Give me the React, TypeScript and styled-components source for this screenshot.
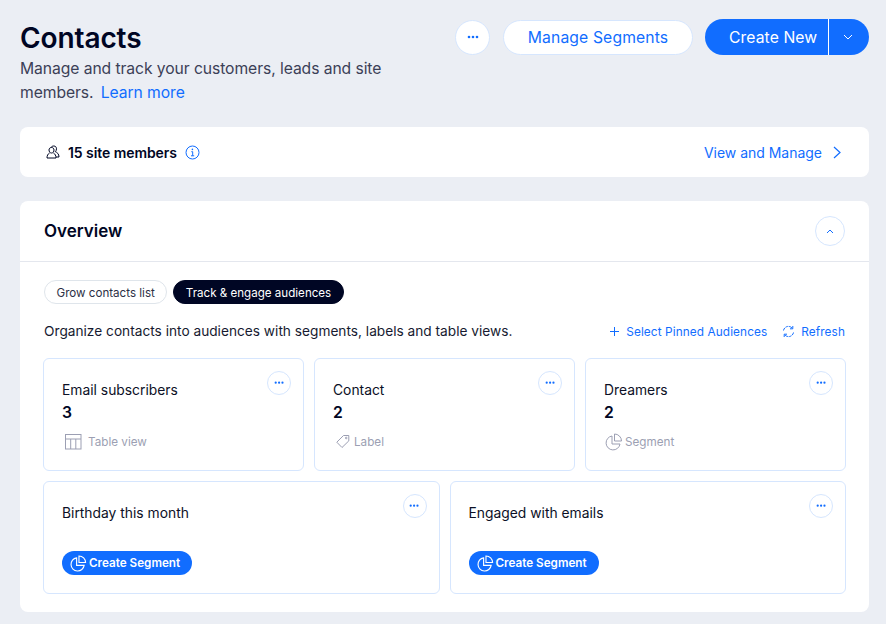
import React from "react";
import styled, { createGlobalStyle } from "styled-components";

const Global = createGlobalStyle`
  html, body { margin: 0; padding: 0; background: #ebeef4; }
  body { font-family: Inter, "Noto Sans", "Liberation Sans", sans-serif; color: #000624; -webkit-font-smoothing: antialiased; }
  * { box-sizing: border-box; }
`;

const BLUE = "#116dff";

const Page = styled.div`
  width: 886px;
  height: 624px;
  overflow: hidden;
  padding: 0 17px 0 20px;
`;
const Header = styled.header`
  display: flex;
  justify-content: space-between;
  align-items: flex-start;
  height: 127px;
  padding-top: 19px;
`;
const TitleBlock = styled.div`
  width: 390px;
`;
const Title = styled.h1`
  margin: 0 0 1px;
  padding-top: 1px;
  font-size: 28px;
  line-height: 36px;
  font-weight: 600;
  letter-spacing: -0.1px;
`;
const Subtitle = styled.p`
  margin: 0;
  font-size: 15.7px;
  line-height: 24px;
  color: #3b4057;
  letter-spacing: -0.08px;
`;
const TextLink = styled.a`
  color: ${BLUE};
  margin-left: 3px;
`;
const Actions = styled.div`
  display: flex;
  align-items: center;
  height: 36px;
`;
const CircleButton = styled.button<{ $size: number }>`
  width: ${(p) => p.$size}px;
  height: ${(p) => p.$size}px;
  padding: 0;
  flex: none;
  border-radius: 50%;
  border: 1px solid #d6e6fe;
  background: #fff;
  color: ${BLUE};
  display: flex;
  align-items: center;
  justify-content: center;
`;
const OutlineButton = styled.button`
  width: 190px;
  height: 35px;
  margin: 0 12px 0 13px;
  border-radius: 18px;
  border: 1px solid #d6e6fe;
  background: #fff;
  color: ${BLUE};
  font: 400 15.7px Inter, sans-serif;
  letter-spacing: 0.13px;
  padding: 0;
`;
const SplitButton = styled.div`
  display: flex;
  width: 164px;
  height: 36px;
  border-radius: 18px;
  overflow: hidden;
  background: ${BLUE};
  color: #fff;
`;
const SplitMain = styled.div`
  width: 124px;
  padding-left: 24px;
  font-size: 15.7px;
  font-weight: 400;
  letter-spacing: 0.1px;
  line-height: 37px;
  border-right: 1px solid #fff;
`;
const SplitCaret = styled.div`
  flex: 1;
  display: flex;
  align-items: center;
  justify-content: center;
  margin-right: 2px;
`;
const Banner = styled.section`
  display: flex;
  align-items: center;
  justify-content: space-between;
  height: 50px;
  padding: 0 28px 0 26px;
  background: #fff;
  border-radius: 8px;
  margin-bottom: 24px;
`;
const BannerLeft = styled.div`
  display: flex;
  align-items: center;
  font-size: 14px;
  font-weight: 600;
  letter-spacing: -0.07px;
`;
const BannerCount = styled.span`
  margin: 0 8px 0 8px;
`;
const BannerLink = styled.a`
  display: flex;
  align-items: center;
  gap: 11px;
  color: ${BLUE};
  font-size: 14px;
  letter-spacing: -0.02px;
`;
const Panel = styled.section`
  height: 411px;
  background: #fff;
  border-radius: 8px;
`;
const PanelHead = styled.div`
  display: flex;
  align-items: center;
  justify-content: space-between;
  height: 61px;
  padding: 0 24px;
  border-bottom: 1px solid #e4e7ee;
`;
const PanelTitle = styled.h2`
  margin: 0;
  font-size: 17px;
  font-weight: 600;
  letter-spacing: 0;
`;
const PanelBody = styled.div`
  padding: 18px 23px 0 23px;
`;
const Tabs = styled.div`
  display: flex;
  gap: 6px;
  margin-left: 1px;
`;
const Tab = styled.div<{ $active?: boolean }>`
  height: 24px;
  line-height: 24px;
  padding: 0 11.5px;
  border-radius: 12px;
  font-size: 11.6px;
  border: 1px solid ${(p) => (p.$active ? "#000624" : "#dfe5eb")};
  background: ${(p) => (p.$active ? "#000624" : "#fff")};
  color: ${(p) => (p.$active ? "#fff" : "#2b2f45")};
`;
const InfoRow = styled.div`
  display: flex;
  align-items: center;
  justify-content: space-between;
  height: 20px;
  margin: 17px 1px 17px 1px;
`;
const InfoText = styled.span`
  font-size: 13.7px;
  color: #161a30;
`;
const InfoActions = styled.div`
  display: flex;
  align-items: center;
  gap: 15px;
  padding-top: 1px;
  color: ${BLUE};
  font-size: 11.8px;
  font-weight: 400;
  letter-spacing: 0.1px;
`;
const InfoAction = styled.a`
  display: flex;
  align-items: center;
  gap: 6px;
`;
const Grid = styled.div<{ $cols: number }>`
  display: grid;
  grid-template-columns: repeat(${(p) => p.$cols}, 1fr);
  gap: 10px;
  margin-bottom: 10px;
`;
const Card = styled.div`
  position: relative;
  height: 113px;
  padding: 22px 18px 0 18px;
  border: 1px solid #d6e6fe;
  border-radius: 6px;
  background: #fff;
`;
const CardMenu = styled.div`
  position: absolute;
  top: 12px;
  right: 12px;
`;
const CardTitle = styled.div`
  font-size: 13.85px;
  line-height: 18px;
  font-weight: 400;
  color: #0c1026;
`;
const CardCount = styled.div`
  font-size: 15.7px;
  line-height: 22px;
  margin-top: 3px;
  font-weight: 600;
`;
const CardMeta = styled.div<{ $gap: number; $inset: number }>`
  display: flex;
  align-items: center;
  gap: ${(p) => p.$gap}px;
  margin: 9px 0 0 ${(p) => p.$inset}px;
  height: 18px;
  font-size: 11.7px;
  color: #9c9fb3;
`;
const CreateButton = styled.button`
  display: inline-flex;
  align-items: center;
  gap: 2px;
  height: 24px;
  margin-top: 29px;
  padding: 0 12px 0 8px;
  border: none;
  border-radius: 12px;
  background: ${BLUE};
  color: #fff;
  font: 600 11.7px Inter, sans-serif;
`;

const Dots = ({ s = 1 }: { s?: number }) => (
  <svg width={12 * s} height={4 * s} viewBox="0 0 12 4" fill="currentColor">
    <circle cx="2" cy="2" r="1.3" />
    <circle cx="6" cy="2" r="1.3" />
    <circle cx="10" cy="2" r="1.3" />
  </svg>
);
const Pie = ({ size = 18, color = "currentColor", sw = 1 }: { size?: number; color?: string; sw?: number }) => (
  <svg width={size} height={size} viewBox="0 0 18 18" fill="none" stroke={color} strokeWidth={sw}>
    <path d="M7 3a7 7 0 1 0 8 8H7z" />
    <path d="M9.5 1a7 7 0 0 1 7 7h-7z" />
  </svg>
);
const Members = () => (
  <svg width="14" height="14" viewBox="0 0 14 14" fill="none" stroke="#000624" strokeWidth="1">
    <path d="M5.500 2.500c1.500 0 2.500 1 2.500 2.500S7 8 5.500 8 3 6.500 3 5s1-2.500 2.500-2.500z" />
    <path d="M1 13c0-2.300.8-4 2.700-5.200M7.300 7.800C9.200 9 10 10.700 10 13H1" />
    <path d="M5 2.500C5.500 1.500 6.500 1 7.800 1 9.500 1 10.500 2.200 10.500 3.800c0 1.200-.5 2.300-1.300 2.800 2 .8 3.800 2.400 3.800 5.400h-3" />
  </svg>
);
const Info = () => (
  <svg width="15" height="15" viewBox="0 0 15 15" fill="none" stroke={BLUE}>
    <circle cx="7.500" cy="7.500" r="6.500" />
    <path d="M6.300 6.700h1.400v4M6 10.800h3.200" />
    <circle cx="7.400" cy="4.400" r=".8" fill={BLUE} stroke="none" />
  </svg>
);
const Chevron = ({ d, w, h, vb, sw = 1 }: { d: string; w: number; h: number; vb: string; sw?: number }) => (
  <svg width={w} height={h} viewBox={vb} fill="none" stroke="currentColor" strokeWidth={sw}>
    <path d={d} />
  </svg>
);
const TableIcon = () => (
  <svg width="17" height="16" viewBox="0 0 17 16" fill="none" stroke="#9c9fb3">
    <rect x=".5" y=".5" width="15.500" height="14.500" />
    <path d="M.5 5h15.500M5.700 5v10M10.800 5v10" />
  </svg>
);
const TagIcon = () => (
  <svg width="16" height="16" viewBox="0 0 16 16" fill="none" stroke="#9c9fb3">
    <path d="M8.500 1.500h5.300v5.400L7 13.500 1.800 8.200z" />
    <circle cx="11.200" cy="4" r=".8" />
  </svg>
);
const PlusIcon = () => (
  <svg width="11" height="11" viewBox="0 0 11 11" fill="none" stroke={BLUE}>
    <path d="M5.500 1v9M1 5.500h9" />
  </svg>
);
const RefreshIcon = () => (
  <svg width="13" height="13" viewBox="0 0 13 13" fill="none" stroke={BLUE}>
    <path d="M1.500 5.500A5 5 0 0 1 10.500 3.500M11.500 7.500A5 5 0 0 1 2.500 9.500" strokeDasharray="3 .8" />
    <path d="M10.800 1v2.800H8M2.200 12V9.200H5" />
  </svg>
);

const topCards = [
  { title: "Email subscribers", count: "3", meta: "Table view", icon: <TableIcon />, gap: 6, inset: 3 },
  { title: "Contact", count: "2", meta: "Label", icon: <TagIcon />, gap: 3, inset: 2 },
  { title: "Dreamers", count: "2", meta: "Segment", icon: <Pie size={18} color="#9c9fb3" />, gap: 2, inset: 1 },
];
const bottomCards = ["Birthday this month", "Engaged with emails"];

const Menu = () => (
  <CardMenu>
    <CircleButton $size={24}>
      <Dots s={0.85} />
    </CircleButton>
  </CardMenu>
);

export default function App() {
  return (
    <Page>
      <Global />
      <Header>
        <TitleBlock>
          <Title>Contacts</Title>
          <Subtitle>
            Manage and track your customers, leads and site members. <TextLink>Learn more</TextLink>
          </Subtitle>
        </TitleBlock>
        <Actions>
          <CircleButton $size={35}>
            <Dots />
          </CircleButton>
          <OutlineButton>Manage Segments</OutlineButton>
          <SplitButton>
            <SplitMain>Create New</SplitMain>
            <SplitCaret>
              <Chevron w={10} h={6} vb="0 0 10 6" d="M1 1l4 4 4-4" />
            </SplitCaret>
          </SplitButton>
        </Actions>
      </Header>
      <Banner>
        <BannerLeft>
          <Members />
          <BannerCount>15 site members</BannerCount>
          <Info />
        </BannerLeft>
        <BannerLink>
          View and Manage
          <Chevron w={8} h={13} vb="0 0 8 13" d="M1 1l6 5.500-6 5.500" sw={1.200} />
        </BannerLink>
      </Banner>
      <Panel>
        <PanelHead>
          <PanelTitle>Overview</PanelTitle>
          <CircleButton $size={30}>
            <Chevron w={8} h={5} vb="0 0 8 5" d="M1 4l3-3 3 3" />
          </CircleButton>
        </PanelHead>
        <PanelBody>
          <Tabs>
            <Tab>Grow contacts list</Tab>
            <Tab $active>Track &amp; engage audiences</Tab>
          </Tabs>
          <InfoRow>
            <InfoText>Organize contacts into audiences with segments, labels and table views.</InfoText>
            <InfoActions>
              <InfoAction>
                <PlusIcon />
                Select Pinned Audiences
              </InfoAction>
              <InfoAction>
                <RefreshIcon />
                Refresh
              </InfoAction>
            </InfoActions>
          </InfoRow>
          <Grid $cols={3}>
            {topCards.map((c) => (
              <Card key={c.title}>
                <Menu />
                <CardTitle>{c.title}</CardTitle>
                <CardCount>{c.count}</CardCount>
                <CardMeta $gap={c.gap} $inset={c.inset}>
                  {c.icon}
                  {c.meta}
                </CardMeta>
              </Card>
            ))}
          </Grid>
          <Grid $cols={2}>
            {bottomCards.map((t) => (
              <Card key={t}>
                <Menu />
                <CardTitle>{t}</CardTitle>
                <CreateButton>
                  <Pie size={17} sw={1.2} />
                  Create Segment
                </CreateButton>
              </Card>
            ))}
          </Grid>
        </PanelBody>
      </Panel>
    </Page>
  );
}
